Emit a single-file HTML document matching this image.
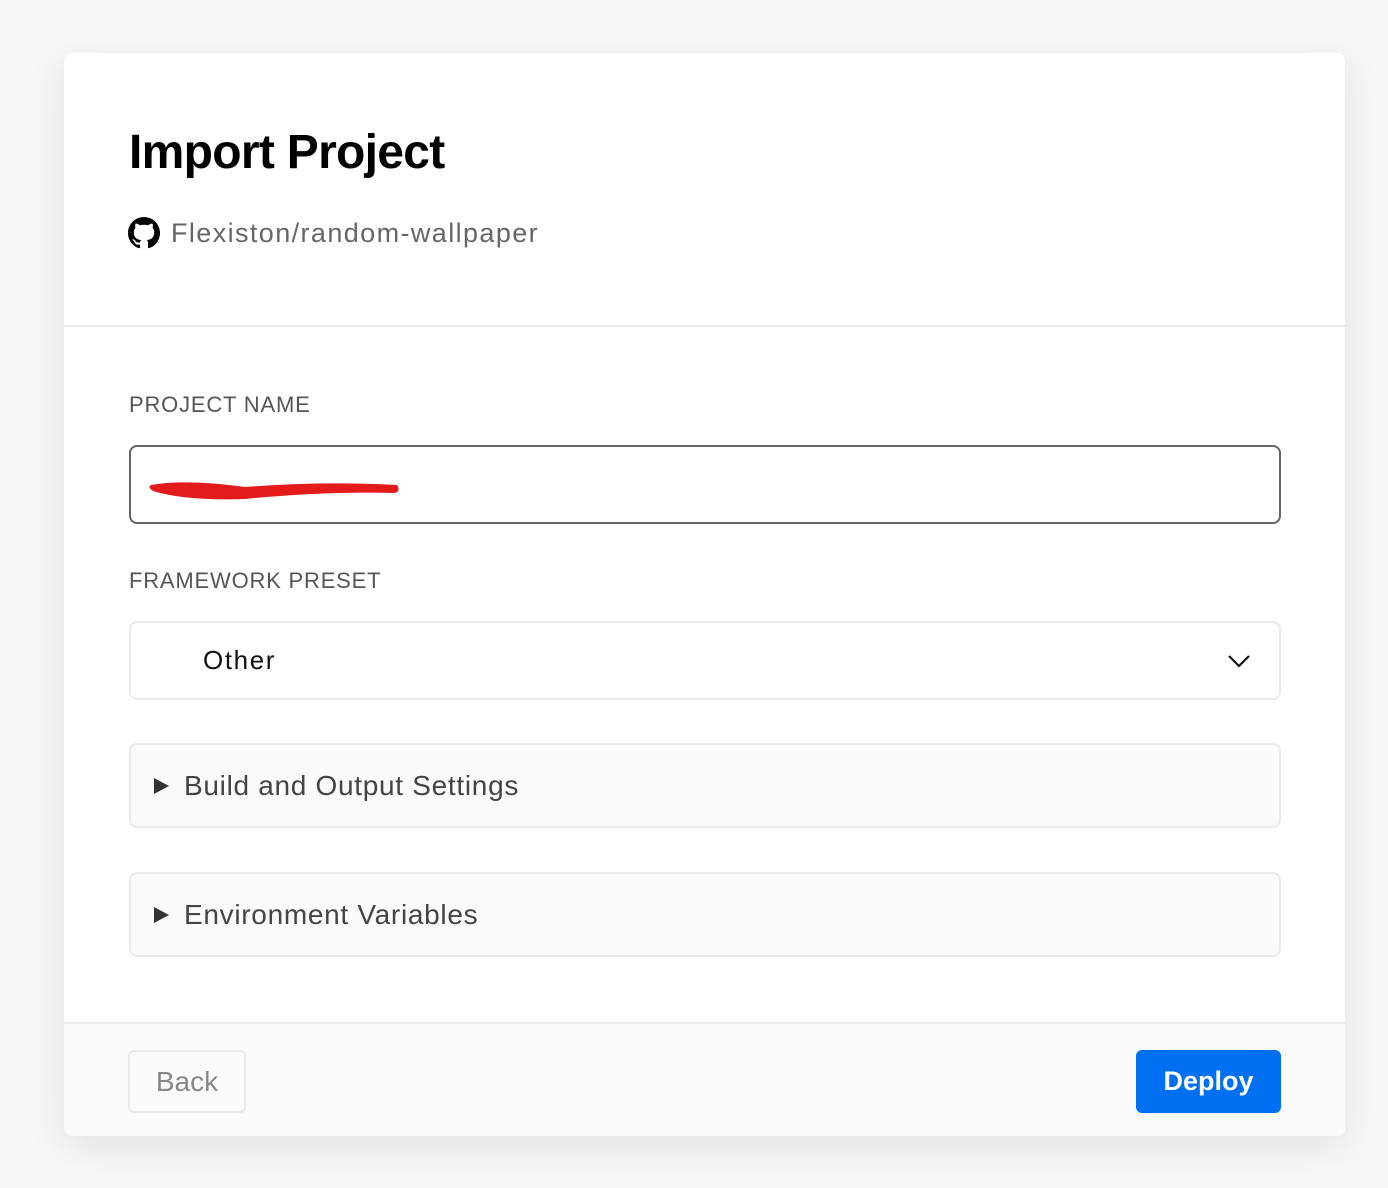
<!DOCTYPE html>
<html><head><meta charset="utf-8"><style>
*{box-sizing:border-box;margin:0;padding:0}
body{width:1388px;height:1188px;background:#f7f7f7;font-family:"Liberation Sans",sans-serif;position:relative;overflow:hidden}
.card{position:absolute;left:64px;top:53px;width:1281px;height:1083px;background:#fff;border-radius:8px;box-shadow:0 10px 40px rgba(0,0,0,.09);overflow:hidden}
.abs{position:absolute}
h1{position:absolute;left:65px;top:72px;font-size:48px;font-weight:bold;color:#000;letter-spacing:-0.7px;line-height:56px}
.repo{left:64px;top:164px;font-size:27px;color:#666;display:flex;align-items:center;line-height:32px;letter-spacing:1.4px}
.repo svg{margin-right:11px}
.div1{left:0;top:272px;width:100%;height:2px;background:#eaeaea}
.lbl{font-size:22px;color:#555;left:65px;line-height:26px;letter-spacing:0.8px}
.input{left:65px;top:392px;width:1152px;height:79px;border:2px solid #666;border-radius:8px}
.select{left:65px;top:568px;width:1152px;height:79px;border:2px solid #eaeaea;border-radius:8px;font-size:26px;color:#111;letter-spacing:1.6px}
.coll{left:65px;width:1152px;height:85px;border:2px solid #eaeaea;border-radius:8px;background:#fafafa;font-size:28px;color:#444;display:flex;align-items:center;padding-left:23px;letter-spacing:0.7px}
.tri{width:0;height:0;border-top:8px solid transparent;border-bottom:8px solid transparent;border-left:15px solid #333;margin-right:15px}
.footer{left:0;top:969px;width:100%;height:114px;background:#fafafa;border-top:2px solid #eaeaea}
.btn{top:26px;height:63px;border-radius:6px;font-size:28px;display:flex;align-items:center;justify-content:center}
</style></head><body>
<div class="card">
<h1>Import Project</h1>
<div class="abs repo"><svg width="32" height="32" viewBox="0 0 16 16"><path fill="#000" d="M8 0C3.58 0 0 3.58 0 8c0 3.54 2.29 6.53 5.47 7.59.4.07.55-.17.55-.38 0-.19-.01-.82-.01-1.49-2.01.37-2.530-.49-2.690-.94-.09-.23-.48-.94-.82-1.13-.28-.15-.68-.52-.01-.53.63-.01 1.08.58 1.23.82.72 1.21 1.87.87 2.33.66.07-.52.28-.87.51-1.07-1.78-.2-3.64-.89-3.64-3.95 0-.87.31-1.59.82-2.15-.08-.2-.36-1.02.08-2.12 0 0 .67-.21 2.2.82.64-.18 1.32-.27 2-.27.68 0 1.36.09 2 .27 1.53-1.04 2.2-.82 2.2-.82.44 1.1.16 1.92.08 2.12.51.56.82 1.27.82 2.15 0 3.07-1.87 3.75-3.65 3.95.29.25.54.73.54 1.48 0 1.07-.01 1.93-.01 2.2 0 .21.15.46.55.38A8.013 8.013 0 0016 8c0-4.42-3.58-8-8-8z"/></svg>Flexiston/random-wallpaper</div>
<div class="abs div1"></div>
<div class="abs lbl" style="top:339px">PROJECT NAME</div>
<div class="abs input"><svg class="abs" style="left:14px;top:26px" width="256" height="30"><path d="M6 12 Q40 6 100 14 Q180 8 252 12 Q256 18 250 20 Q180 18 100 26 Q40 28 8 18 Q2 14 6 12Z" fill="#e31b1b"/></svg></div>
<div class="abs lbl" style="top:515px">FRAMEWORK PRESET</div>
<div class="abs select"><span class="abs" style="left:72px;top:22px">Other</span><svg class="abs" style="left:1096px;top:31px" width="24" height="14"><path d="M2 2 L12 12 L22 2" stroke="#111" stroke-width="2.2" fill="none"/></svg></div>
<div class="abs coll" style="top:690px"><div class="tri"></div>Build and Output Settings</div>
<div class="abs coll" style="top:819px"><div class="tri"></div>Environment Variables</div>
<div class="abs footer">
<div class="abs btn" style="left:64px;width:118px;border:2px solid #eaeaea;color:#888;background:#fafafa">Back</div>
<div class="abs btn" style="left:1072px;width:145px;background:#0070f3;color:#fff;font-weight:bold;font-size:27px">Deploy</div>
</div>
</div>
</body></html>
